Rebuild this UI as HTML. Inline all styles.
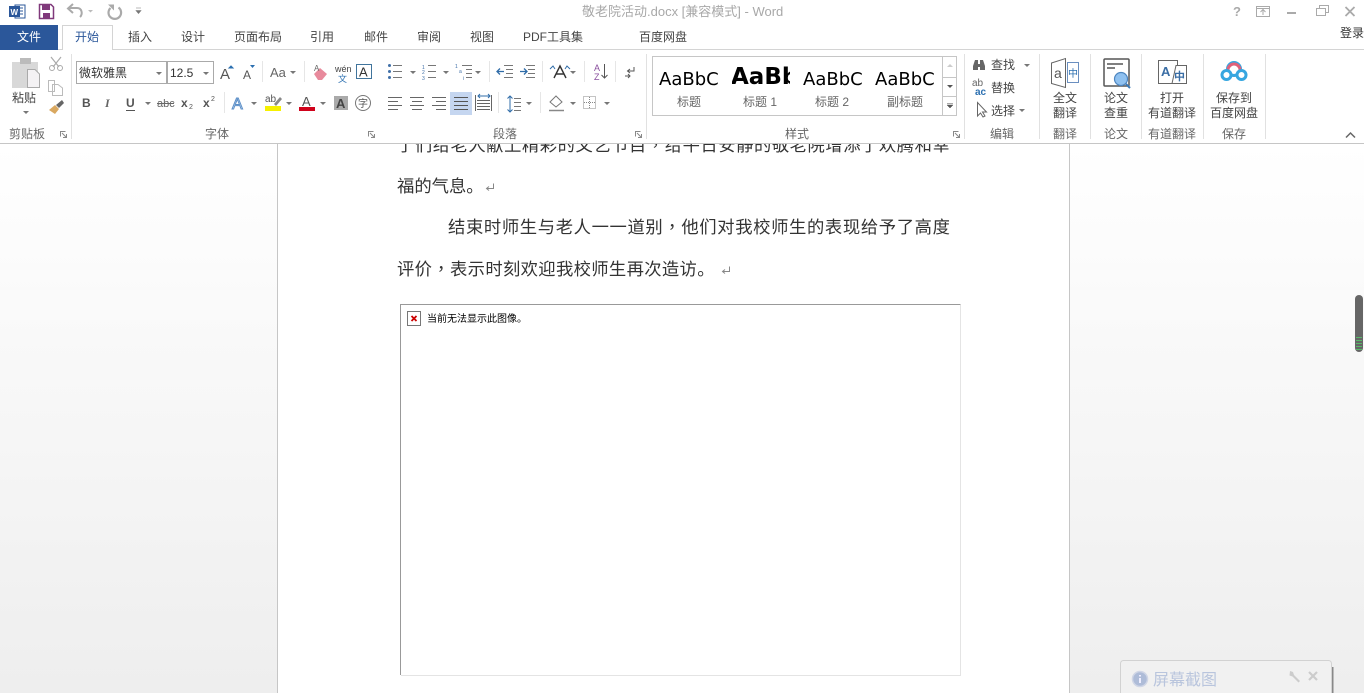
<!DOCTYPE html>
<html><head><meta charset="utf-8"><style>
html,body{margin:0;padding:0;width:1364px;height:693px;overflow:hidden;background:#fff}
svg{display:block;position:absolute;left:0;top:0}
text{font-family:"Liberation Sans","Noto Sans CJK SC",sans-serif;font-size:12px;fill:#444}
.t{fill:#444}
.l{fill:#666}
.b{font-family:"Noto Sans CJK SC",sans-serif;font-size:17.33px;fill:#333}
.k{font-family:"Noto Sans CJK TC",sans-serif}
.s{font-family:"DejaVu Sans",sans-serif;font-size:18px;fill:#000}
.c{text-anchor:middle}
</style></head><body>
<svg width="1364" height="693" viewBox="0 0 1364 693" xmlns="http://www.w3.org/2000/svg">
<defs>
<linearGradient id="bg" x1="0" y1="0" x2="0" y2="1"><stop offset="0" stop-color="#fff"/><stop offset="1" stop-color="#eeeeee"/></linearGradient>
<clipPath id="cb"><rect x="732" y="60" width="58" height="30"/></clipPath>
<clipPath id="cp"><rect x="278" y="144" width="792" height="560"/></clipPath>
</defs>
<!-- document area -->
<rect x="0" y="144" width="1364" height="549" fill="url(#bg)"/>
<rect x="278" y="144" width="791" height="549" fill="#fff"/>
<path d="M277.5 144V693M1069.5 144V693" stroke="#c6c6c6" fill="none"/>
<g clip-path="url(#cp)">
<text class="b" x="397" y="151" style="letter-spacing:.52px">了们给老人献上精彩的文艺节目<tspan class="k">，</tspan>给平日安静的敬老院增添了欢腾和幸</text>
</g>
<text class="b" x="397" y="192">福的气息。</text>
<text class="b" x="448" y="233" style="letter-spacing:.62px">结束时师生与老人一一道别<tspan class="k">，</tspan>他们对我校师生的表现给予了高度</text>
<text class="b" x="397" y="275" style="letter-spacing:.33px">评价<tspan class="k">，</tspan>表示时刻欢迎我校师生再次造访。</text>
<path d="M493.500 183.500V188.500H487M489 186.500L486.500 188.500L489 190.500" stroke="#888" fill="none"/>
<path d="M729.500 266.500V271.500H723M725 269.500L722.500 271.500L725 273.500" stroke="#888" fill="none"/>
<!-- image placeholder -->
<path d="M400.500 675V304.500H960.500" stroke="#999" fill="none"/>
<path d="M960.500 305V675.500H401" stroke="#e4e4e4" fill="none"/>
<rect x="407.500" y="311.500" width="13" height="14" fill="#fff" stroke="#777"/>
<path d="M411.500 316L416.500 321M416.500 316L411.500 321" stroke="#c00" stroke-width="1.800"/>
<text x="427" y="322" style="font-size:10px;fill:#000">当前无法显示此图像。</text>
<!-- scroll marker -->
<rect x="1355" y="295" width="8" height="57" rx="4" fill="#666"/>
<path d="M1356 337.500h6M1356 340.500h6M1356 343.500h6M1356 346.500h6M1356 349.500h6" stroke="#58b868"/>
<!-- notification -->
<rect x="1332" y="667" width="1.500" height="26" fill="#888"/>
<rect x="1120.500" y="660.500" width="211" height="40" rx="3" fill="#f1f1f1" stroke="#d2d2d2"/>
<circle cx="1140" cy="679" r="7.500" fill="#aebcd8" stroke="#d0d6e6" stroke-width="1.500"/>
<path d="M1140 675v1.500M1140 678v5" stroke="#eef" stroke-width="2"/>
<text x="1153" y="685" style="font-size:16px;fill:#b9c5dd">屏幕截图</text>
<path d="M1290 671l3 1 1 3 6 6-1.500 1.500-6-6-3-1z" fill="#ccc"/>
<path d="M1309 672l8 8M1317 672l-8 8" stroke="#ccc" stroke-width="2.200"/>

<!-- ribbon chrome -->
<rect x="0" y="0" width="1364" height="144" fill="#fff"/>
<path d="M0 49.500H1364" stroke="#d4d4d4"/>
<path d="M0 143.500H1364" stroke="#c6c6c6"/>
<!-- QAT -->
<rect x="15" y="5" width="10" height="13" fill="#fff" stroke="#2b579a"/>
<path d="M19 8h4M19 11h4M19 14h4" stroke="#2b579a"/>
<rect x="9" y="6" width="11" height="11" fill="#2b579a"/>
<text x="10.500" y="15" style="font-size:8px;font-weight:bold;fill:#fff">W</text>
<path d="M39.500 4.500H51L53.500 7V18.500H39.500Z" fill="#fff" stroke="#80397b" stroke-width="1.500"/>
<rect x="42" y="5" width="8" height="5" fill="#80397b"/>
<rect x="43" y="13" width="7" height="5" fill="#80397b"/>
<path d="M68 10h9c5 0 6 6 3 9" stroke="#aaa" stroke-width="2" fill="none" transform="translate(0 -2)"/>
<path d="M73 4l-5 4.500 5 4.500" stroke="#aaa" stroke-width="2" fill="none"/>
<path d="M88 10h5l-2.500 2.500z" fill="#bbb"/>
<path d="M118.500 7.500A6.300 6.300 0 1 1 110.500 8" stroke="#aaa" stroke-width="2.200" fill="none"/>
<path d="M108 4.500h6v6z" fill="#aaa"/>
<path d="M136 8h5M136 10.500h5l-2.500 3z" fill="#777" stroke="#777" stroke-width=".6"/>
<!-- title -->
<text x="582" y="16" style="font-size:13px;fill:#a8a8a8">敬老院活动.docx [兼容模式] - Word</text>
<!-- window controls -->
<text x="1233" y="16" style="font-size:13px;font-weight:bold;fill:#aaa">?</text>
<rect x="1256.500" y="6.500" width="13" height="10" fill="none" stroke="#aaa"/>
<path d="M1263 15V10M1260.500 12l2.500-2.500 2.500 2.500M1257 8.500h12" stroke="#aaa" fill="none"/>
<path d="M1287 13h9" stroke="#aaa" stroke-width="2"/>
<path d="M1319.500 8.500V5.500H1328.500V12.500H1325.500" stroke="#aaa" fill="none"/>
<rect x="1316.500" y="8.500" width="9" height="7" fill="#fff" stroke="#aaa"/>
<path d="M1345.500 7l9 9M1354.500 7l-9 9" stroke="#aaa" stroke-width="1.800"/>
<!-- tabs -->
<rect x="0" y="25" width="58" height="25" fill="#2b579a"/>
<text x="29" y="41" class="c" style="fill:#fff">文件</text>
<path d="M62.500 50V25.500H112.500V50" fill="#fff" stroke="#d4d4d4"/>
<rect x="63" y="48" width="49" height="3" fill="#fff"/>
<text x="75" y="41" style="fill:#2b579a">开始</text>
<text class="t" x="128" y="41">插入</text>
<text class="t" x="181" y="41">设计</text>
<text class="t" x="234" y="41">页面布局</text>
<text class="t" x="310" y="41">引用</text>
<text class="t" x="364" y="41">邮件</text>
<text class="t" x="417" y="41">审阅</text>
<text class="t" x="470" y="41">视图</text>
<text class="t" x="523" y="41">PDF工具集</text>
<text class="t" x="639" y="41">百度网盘</text>
<text x="1340" y="37" style="fill:#333">登录</text>
<!-- separators -->
<path d="M71.500 54V139M646.500 54V139M964.500 54V139M1039.500 54V139M1090.500 54V139M1141.500 54V139M1203.500 54V139M1265.500 54V139" stroke="#e1e1e1"/>
<path d="M262.500 61V82M304.500 61V82M224.500 92V113M489.500 61V82M542.500 61V82M584.500 61V82M615.500 61V82M498.500 92V113M540.500 92V113" stroke="#e6e6e6"/>
<!-- group labels -->
<text class="l" x="9" y="138">剪贴板</text>
<text class="l" x="205" y="138">字体</text>
<text class="l" x="493" y="138">段落</text>
<text class="l" x="785" y="138">样式</text>
<text class="l" x="990" y="138">编辑</text>
<text class="l" x="1053" y="138">翻译</text>
<text class="l" x="1104" y="138">论文</text>
<text class="l" x="1148" y="138">有道翻译</text>
<text class="l" x="1222" y="138">保存</text>
<g fill="none" stroke="#888">
<path d="M60.500 136.500V131.500H65.500M62 133l4 4M66.500 134V137.500H63"/>
<path d="M368.500 136.500V131.500H373.500M370 133l4 4M374.500 134V137.500H371"/>
<path d="M635.500 136.500V131.500H640.500M637 133l4 4M641.500 134V137.500H638"/>
<path d="M953.500 136.500V131.500H958.500M955 133l4 4M959.500 134V137.500H956"/>
</g>
<path d="M1346 137.500l4.500-4.500 4.500 4.500" fill="none" stroke="#666" stroke-width="1.500"/>
<!-- clipboard -->
<rect x="12" y="62" width="26" height="26" fill="#d8d8d8"/>
<rect x="20" y="58" width="11" height="6" fill="#bbb"/>
<path d="M27.500 69.500H35L39.500 74V87.500H27.500Z" fill="#f4f2f4" stroke="#aaa"/>
<text x="12" y="102">粘贴</text>
<path d="M23 111h6l-3 3z" fill="#777"/>
<path d="M51 57l8 10M61 57l-8 10" stroke="#aaa" stroke-width="1.200"/>
<circle cx="52" cy="68" r="2.500" fill="none" stroke="#aaa"/><circle cx="60" cy="68" r="2.500" fill="none" stroke="#aaa"/>
<path d="M48.500 80.500H54.500V91.500H48.500ZM52.500 84.500H58L62.500 88V95.500H52.500Z" fill="#fff" stroke="#bbb"/>
<path d="M49 110l6-5 4 4-4 5z" fill="#d9a860"/><path d="M56 105l6-5 2 3-5 5z" fill="#666"/>
<!-- font boxes -->
<rect x="76.500" y="61.500" width="90" height="22" fill="#fff" stroke="#aaa"/>
<rect x="167.500" y="61.500" width="46" height="22" fill="#fff" stroke="#aaa"/>
<text x="79" y="77" style="fill:#333">微软雅黑</text>
<text x="170" y="77" style="fill:#333">12.5</text>
<path d="M156 72h6l-3 3zM203 72h6l-3 3z" fill="#777"/>
<text x="220" y="79" style="font-size:15px;fill:#555">A</text>
<path d="M229 68l2-2 2 2z" fill="#2b6fb0" stroke="#2b6fb0"/>
<text x="243" y="79" style="font-size:12px;fill:#555">A</text>
<path d="M250 65h5l-2.500 3z" fill="#2b6fb0"/>
<text x="270" y="77" style="font-size:13px;fill:#666">Aa</text>
<path d="M290 71h6l-3 3z" fill="#777"/>
<path d="M314 74l6-6 7 6-5 6h-4z" fill="#e88a9c"/>
<text x="314" y="71" style="font-size:8px;fill:#666">A</text>
<text x="335" y="72" style="font-size:9px;fill:#444">wén</text>
<text x="338" y="82" style="font-size:9px;fill:#2b6fb0">文</text>
<rect x="356.500" y="64.500" width="15" height="14" fill="#fff" stroke="#40749c"/>
<text x="359" y="76.500" style="font-size:13px;fill:#333">A</text>
<!-- font row 2 -->
<text x="82" y="107" style="font-weight:bold;fill:#555">B</text>
<text x="105" y="107" style="font-weight:bold;font-style:italic;fill:#666;font-family:'Liberation Serif',serif">I</text>
<text x="126" y="107" style="font-weight:bold;fill:#555">U</text>
<path d="M126 110.500h9" stroke="#555"/>
<path d="M145 102h6l-3 3z" fill="#777"/>
<text x="157" y="107" style="font-size:11px;fill:#666">abc</text>
<path d="M157 103.500h17" stroke="#666"/>
<text x="181" y="107" style="font-weight:bold;fill:#555">x</text><text x="189" y="109" style="font-size:7px;fill:#555">2</text>
<text x="203" y="107" style="font-weight:bold;fill:#555">x</text><text x="211" y="101" style="font-size:7px;fill:#555">2</text>
<text x="232" y="109" style="font-size:16px;fill:#dce8f6;stroke:#5c8fc8;stroke-width:1">A</text>
<path d="M251 102h6l-3 3z" fill="#777"/>
<text x="265" y="102" style="font-size:10px;fill:#555">ab</text>
<path d="M274 104l6-7 2 2-6 7z" fill="#888"/>
<rect x="265" y="106" width="16" height="5" fill="#f6f000"/>
<path d="M286 102h6l-3 3z" fill="#777"/>
<text x="302" y="106" style="font-size:13px;fill:#555">A</text>
<rect x="299" y="107" width="16" height="4" fill="#d0021b"/>
<path d="M320 102h6l-3 3z" fill="#777"/>
<rect x="334" y="96" width="14" height="14" fill="#aaa"/>
<text x="336" y="108" style="font-size:13px;font-weight:bold;fill:#444">A</text>
<circle cx="363" cy="103" r="7.500" fill="#fff" stroke="#777"/>
<text x="358" y="107" style="font-size:10px;fill:#555">字</text>
<!-- paragraph row 1 -->
<g stroke="#777" fill="none">
<path d="M393 65.500h9M393 71.500h9M393 77.500h9"/>
<path d="M428 65.500h8M428 71.500h8M428 77.500h8"/>
<path d="M462 65.500h10M466 69.500h6M466 73.500h6M466 77.500h6"/>
</g>
<g fill="#3f6fa8"><circle cx="389.500" cy="65.500" r="1.500"/><circle cx="389.500" cy="71.500" r="1.500"/><circle cx="389.500" cy="77.500" r="1.500"/></g>
<text x="422" y="69" style="font-size:5px;fill:#3f6fa8">1</text><text x="422" y="74" style="font-size:5px;fill:#3f6fa8">2</text><text x="422" y="80" style="font-size:5px;fill:#3f6fa8">3</text>
<text x="455" y="68" style="font-size:5px;fill:#3f6fa8">1</text><text x="459" y="73" style="font-size:5px;fill:#3f6fa8">a</text><text x="463" y="80" style="font-size:5px;fill:#3f6fa8">i</text>
<path d="M410 71h6l-3 3zM443 71h6l-3 3zM475 71h6l-3 3z" fill="#777"/>
<path d="M504 65.500h9M506 69.500h7M506 73.500h7M504 77.500h9" stroke="#777"/>
<path d="M497 71.500h7M500 68.500l-3 3 3 3" stroke="#2f6ca8" fill="none" stroke-width="1.300"/>
<path d="M526 65.500h9M528 69.500h7M528 73.500h7M526 77.500h9" stroke="#777"/>
<path d="M520 71.500h7M524 68.500l3 3-3 3" stroke="#2f6ca8" fill="none" stroke-width="1.300"/>
<path d="M554 78l6-12 6 12M556 74h8" stroke="#333" fill="none" stroke-width="1.400"/>
<path d="M550 69l3-3 2 3M570 69l-3-3-2 3" stroke="#2f6ca8" fill="none"/>
<path d="M570 71h6l-3 3z" fill="#777"/>
<text x="594" y="71" style="font-size:9px;fill:#8a4f9e">A</text><text x="594" y="80" style="font-size:9px;fill:#8a4f9e">Z</text>
<path d="M604.500 64V78M601.500 75l3 3 3-3" stroke="#555" fill="none"/>
<path d="M634 67v4h-6M630 69l-2.500 2 2.500 2" stroke="#555" fill="none"/>
<path d="M625 76h5M628 74l2 2-2 2" stroke="#555" fill="none"/>
<!-- paragraph row 2 -->
<rect x="450" y="92" width="22" height="23" fill="#c5d6f0"/>
<g stroke="#666" fill="none">
<path d="M388 97.500h14M388 101.500h10M388 105.500h14M388 109.500h10"/>
<path d="M410 97.500h14M412 101.500h10M410 105.500h14M412 109.500h10"/>
<path d="M432 97.500h14M436 101.500h10M432 105.500h14M436 109.500h10"/>
<path d="M454 97.500h14M454 101.500h14M454 105.500h14M454 109.500h14" stroke="#555"/>
<path d="M477 100.500h13M477 103.500h13M477 106.500h13M477 109.500h13"/>
<path d="M475.500 95v16M491.500 95v16"/>
</g>
<path d="M478 96h12M480 94l-2 2 2 2M488 94l2 2-2 2" stroke="#2f6ca8" fill="none"/>
<path d="M510 96v16M507.500 98.500l2.500-2.500 2.500 2.500M507.500 109.500l2.500 2.500 2.500-2.500" stroke="#2f6ca8" fill="none"/>
<path d="M514 98.500h7M514 102.500h7M514 106.500h7M514 110.500h7" stroke="#777"/>
<path d="M526 102h6l-3 3z" fill="#777"/>
<path d="M550 102l6-6 6 6-6 5z" fill="#fff" stroke="#777"/>
<path d="M549 110.500h15" stroke="#888" stroke-width="1.500"/>
<path d="M570 102h6l-3 3z" fill="#777"/>
<rect x="583.500" y="96.500" width="12" height="12" fill="none" stroke="#888" stroke-dasharray="1 1"/>
<path d="M589.500 97v12M584 102.500h12" stroke="#888" stroke-dasharray="1 1"/>
<path d="M604 102h6l-3 3z" fill="#777"/>
<!-- styles gallery -->
<rect x="652.500" y="56.500" width="304" height="59" fill="#fff" stroke="#c6c6c6"/>
<path d="M942.500 56V116M943 77.500H957M943 96.500H957" stroke="#c6c6c6"/>
<path d="M947 67h6l-3-3z" fill="#ccc"/>
<path d="M947 85h6l-3 3z" fill="#555"/>
<path d="M947 103.500h6M947 105h6l-3 3z" fill="#555" stroke="#555" stroke-width=".5"/>
<text class="s" x="659" y="85">AaBbC</text>
<g clip-path="url(#cb)"><text class="s" x="731" y="84" style="font-size:23px;font-weight:bold">AaBbC</text></g>
<text class="s" x="803" y="85">AaBbC</text>
<text class="s" x="875" y="85">AaBbC</text>
<text class="l" x="677" y="106">标题</text>
<text class="l" x="743" y="106">标题 1</text>
<text class="l" x="815" y="106">标题 2</text>
<text class="l" x="887" y="106">副标题</text>
<!-- editing -->
<path d="M973 69v-4l2-6h3v4h2v-4h3l2 6v4h-5v-3h-2v3z" fill="#666" transform="translate(0 1)"/>
<text x="991" y="69" style="fill:#444">查找</text>
<path d="M1024 64h6l-3 3z" fill="#777"/>
<text x="972" y="86" style="font-size:10px;fill:#666">ab</text>
<text x="975" y="95" style="font-size:10px;font-weight:bold;fill:#2b6fb0">ac</text>
<text x="991" y="92" style="fill:#444">替换</text>
<path d="M977.500 102.500V116l3-3 2.500 4 2-1-2.500-4h4z" fill="#fff" stroke="#666"/>
<text x="991" y="115" style="fill:#444">选择</text>
<path d="M1019 109h6l-3 3z" fill="#777"/>
<!-- translate -->
<path d="M1051.500 63L1065.500 58.500V87.500L1051.500 83.500Z" fill="#fff" stroke="#666"/>
<text x="1054" y="78" style="font-size:14px;fill:#555">a</text>
<rect x="1067.500" y="62.500" width="11" height="20" fill="#fff" stroke="#6a8fc0"/>
<text x="1068" y="77" style="font-size:10px;fill:#2b6fb0">中</text>
<text x="1053" y="102">全文</text>
<text x="1053" y="117">翻译</text>
<!-- paper -->
<rect x="1104" y="59" width="25" height="27" rx="1" fill="#fff" stroke="#555" stroke-width="1.500"/>
<path d="M1107 64h16M1107 68h8" stroke="#555" stroke-width="1.500"/>
<circle cx="1121" cy="79" r="6.500" fill="#8fc1f0" stroke="#4e86c0" stroke-width="1.200"/>
<path d="M1126 84l4 4" stroke="#3a78b5" stroke-width="2"/>
<text x="1104" y="102">论文</text>
<text x="1104" y="117">查重</text>
<!-- youdao -->
<rect x="1158.500" y="60.500" width="19" height="23" fill="#fff" stroke="#666"/>
<text x="1161" y="76" style="font-size:13px;font-weight:bold;fill:#3a6ea5">A</text>
<path d="M1176 65.500H1186.500V83.500H1172Z" fill="#fff" stroke="#666"/>
<text x="1174" y="80" style="font-size:11px;font-weight:bold;fill:#3a6ea5">中</text>
<text x="1160" y="102">打开</text>
<text x="1148" y="117">有道翻译</text>
<!-- baidu -->
<circle cx="1234" cy="69" r="6.500" fill="none" stroke="#36a6e0" stroke-width="3"/>
<path d="M1228 70a6 6 0 0 1 12 0" fill="none" stroke="#e0607a" stroke-width="3"/>
<circle cx="1226.500" cy="75" r="4.500" fill="#fff" stroke="#36a6e0" stroke-width="3"/>
<circle cx="1241.500" cy="75" r="4.500" fill="#fff" stroke="#36a6e0" stroke-width="3"/>
<text x="1216" y="102">保存到</text>
<text x="1210" y="117">百度网盘</text>
</svg>
</body></html>
